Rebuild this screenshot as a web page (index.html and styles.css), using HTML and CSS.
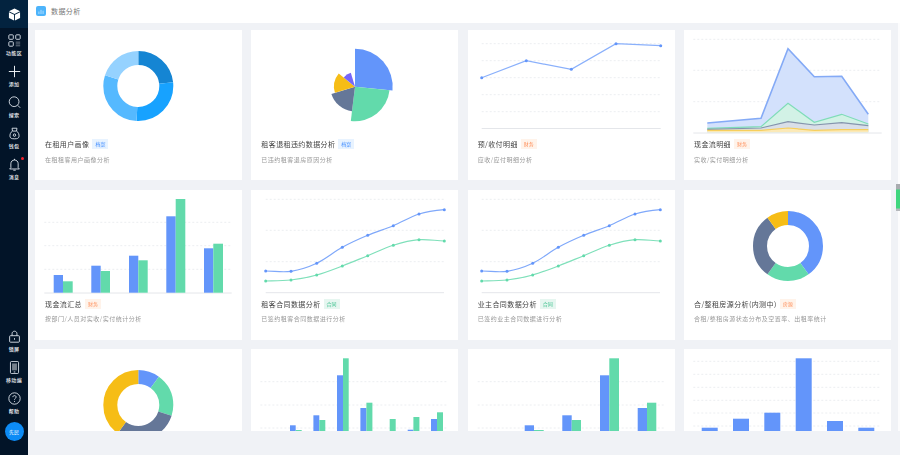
FILE: index.html
```html
<!DOCTYPE html>
<html>
	<head>
		<meta charset="utf-8">
		<title>数据分析</title>
		<link rel="stylesheet" href="styles.css">
	</head>
	<body>
		<div class="app">
			<div class="sidebar">
				<div class="logo">
					<svg width="13" height="13" viewBox="0 0 14 14"><path d="M7 0.5 13 3.5 7 6.5 1 3.5Z" fill="#fff"/><path d="M1 4.5 6.5 7.3V13.5L1 10.7Z" fill="#fff"/><path d="M13 4.5 7.5 7.3V13.5L13 10.7Z" fill="#fff"/></svg>
				</div>
				<ul class="nav">
					<li class="nav-item">
						<svg viewBox="0 0 16 16" fill="none" stroke="#dfe6ee" stroke-width="1.1"><rect x="1" y="1" width="5.5" height="5.5" rx="1"/><rect x="9.5" y="1" width="5.5" height="5.5" rx="1"/><rect x="1" y="9.5" width="5.5" height="5.5" rx="1"/><path d="M9.5 10H15M9.5 12.200H15M9.500 14.500H15" stroke="#75808c"/></svg>
						<span>功能区</span>
					</li>
					<li class="nav-item">
						<svg viewBox="0 0 16 16" fill="none" stroke="#eef2f6" stroke-width="1.2"><path d="M8 1V15M1 8H15"/></svg>
						<span>添加</span>
					</li>
					<li class="nav-item">
						<svg viewBox="0 0 16 16" fill="none" stroke="#dfe6ee" stroke-width="1.1"><circle cx="7.5" cy="7" r="6"/><path d="M12 11.500 15 14.500"/></svg>
						<span>搜索</span>
					</li>
					<li class="nav-item">
						<svg viewBox="0 0 16 16" fill="none" stroke="#dfe6ee" stroke-width="1.1"><path d="M5.500 5 5 1.500H11L10.500 5"/><path d="M5.500 5C3 6.500 2 9.500 2.500 12 3 14 4.500 14.500 8 14.500S13 14 13.500 12C14 9.500 13 6.500 10.500 5Z"/><circle cx="8" cy="10" r="1.500"/></svg>
						<span>钱包</span>
					</li>
					<li class="nav-item">
						<svg viewBox="0 0 16 16" fill="none" stroke="#dfe6ee" stroke-width="1.1"><path d="M3.500 12V7C3.500 4.200 5.500 2.500 8 2.500S12.500 4.200 12.500 7V12L14 13.500H2Z"/><path d="M8 1V2.500M6.500 15H9.500"/></svg>
						<span>消息</span>
						<i class="dot"></i>
					</li>
				</ul>
				<ul class="nav nav-bottom">
					<li class="nav-item">
						<svg viewBox="0 0 16 16" fill="none" stroke="#dfe6ee" stroke-width="1.1"><rect x="2" y="7" width="12" height="8" rx="1"/><path d="M5 7V4.500C5 2.800 6.300 1.500 8 1.500S11 2.800 11 4.500V7M8 10V12"/></svg>
						<span>锁屏</span>
					</li>
					<li class="nav-item">
						<svg viewBox="0 0 16 16" fill="none" stroke="#dfe6ee" stroke-width="1.1"><rect x="3" y="0.5" width="10" height="15" rx="1.500"/><rect x="5" y="3" width="6" height="8.500" fill="#75808c" stroke="none"/><path d="M7 13.500H9"/></svg>
						<span>移动端</span>
					</li>
					<li class="nav-item">
						<svg viewBox="0 0 16 16" fill="none" stroke="#dfe6ee" stroke-width="1.1"><circle cx="8" cy="8" r="7"/><path d="M6 6.300C6 3.800 10 3.800 10 6.300 10 7.800 8 7.800 8 9.500M8 11V12.200"/></svg>
						<span>帮助</span>
					</li>
				</ul>
				<div class="avatar">先民</div>
			</div>
			<div class="main">
				<div class="header">
					<span class="header-icon">
						<svg width="6" height="5" viewBox="0 0 7 6" fill="none" stroke="#bfe4ff" stroke-width="1"><path d="M1 6V3M3.500 6V1M6 6V2"/></svg>
					</span>
					<span class="header-title">数据分析</span>
				</div>
				<div class="content">
					<div class="grid">
						<div class="card">
							<div class="chart">
								<svg width="207" height="105" viewBox="0 0 207 105">
									<circle class="ring" cx="103.300" cy="56" r="28" stroke="#1585d3" pathLength="100" stroke-dasharray="23.300 76.700" stroke-dashoffset="25"/>
									<circle class="ring" cx="103.300" cy="56" r="28" stroke="#17a2ff" pathLength="100" stroke-dasharray="27.500 72.500" stroke-dashoffset="1.700"/>
									<circle class="ring" cx="103.300" cy="56" r="28" stroke="#55b9ff" pathLength="100" stroke-dasharray="29.200 70.800" stroke-dashoffset="-25.800"/>
									<circle class="ring" cx="103.300" cy="56" r="28" stroke="#95d2ff" pathLength="100" stroke-dasharray="20 80" stroke-dashoffset="-55"/>
								</svg>
							</div>
							<div class="card-title">在租用户画像<span class="tag tag-blue">档案</span></div>
							<div class="card-desc">在租租客用户画像分析</div>
						</div>
						<div class="card">
							<div class="chart">
								<svg width="207" height="105" viewBox="0 0 207 105">
									<path d="M104 56.700V18.700A38 38 0 0 1 141.500 60.600Z" fill="#6395fa"/>
									<path d="M104 56.700 138.500 60.300A34.700 34.700 0 0 1 99.800 91.100Z" fill="#62daab"/>
									<path d="M104 56.700 101 81.200A24.700 24.700 0 0 1 80.400 63.900Z" fill="#657798"/>
									<path d="M104 56.700 83.900 62.800A21 21 0 0 1 87.700 43.500Z" fill="#f6bd16"/>
									<path d="M104 56.700 92.700 47.600A14.500 14.500 0 0 1 99.800 42.800Z" fill="#7666f9"/>
								</svg>
							</div>
							<div class="card-title">租客退租违约数据分析<span class="tag tag-blue">档案</span></div>
							<div class="card-desc">已违约租客退房原因分析</div>
						</div>
						<div class="card">
							<div class="chart">
								<svg width="207" height="105" viewBox="0 0 207 105">
									<path class="grid-line" d="M13.700 13.700H192.700M13.700 30.700H192.700M13.700 47.700H192.700M13.700 64.700H192.700M13.700 81.700H192.700"/>
									<path class="axis" d="M13.700 98.500H192.700"/>
									<path class="line" d="M13.700 47.700 58.300 30.700 103.300 39.300 148 13.700 192.700 15.700" stroke="#8ab0fb"/>
									<g fill="#6395fa"><circle cx="13.700" cy="47.700" r="1.500"/><circle cx="58.300" cy="30.700" r="1.500"/><circle cx="103.300" cy="39.300" r="1.500"/><circle cx="148" cy="13.700" r="1.500"/><circle cx="192.700" cy="15.700" r="1.500"/></g>
								</svg>
							</div>
							<div class="card-title">预/收付明细<span class="tag tag-orange">财务</span></div>
							<div class="card-desc">应收/应付明细分析</div>
						</div>
						<div class="card">
							<div class="chart">
								<svg width="207" height="105" viewBox="0 0 207 105">
									<path class="grid-line" d="M9.300 9.300H196M9.300 40.300H196M9.300 71.700H196"/>
									<path class="axis" d="M9.300 103H197.700"/>
									<path d="M23.300 93 77 88.300 104 18.700 130.300 46.700 157.700 46.300 184.300 84.300V102.300H23.300Z" fill="#d3e1fc"/>
									<path d="M23.300 98.300 77 96.700 104 73.300 130.300 92.300 157.700 84.300 184.300 94V102.300H23.300Z" fill="#d2f2e6"/>
									<path d="M23.300 99.300 77 98 104 91.700 130.300 95 157.700 92.700 184.300 95.700V102.300H23.300Z" fill="#d9dfe8"/>
									<path d="M23.300 100.300 77 100.300 104 98 130.300 100.300 157.700 99.700 184.300 99.700V102.300H23.300Z" fill="#fbe9b8"/>
									<path class="line line-thick" d="M23.300 93 77 88.300 104 18.700 130.300 46.700 157.700 46.300 184.300 84.300" stroke="#84aaf6"/>
									<path class="line" d="M23.300 98.300 77 96.700 104 73.300 130.300 92.300 157.700 84.300 184.300 94" stroke="#7fdcb8"/>
									<path class="line" d="M23.300 99.300 77 98 104 91.700 130.300 95 157.700 92.700 184.300 95.700" stroke="#8594ad"/>
									<path class="line" d="M23.300 100.300 77 100.300 104 98 130.300 100.300 157.700 99.700 184.300 99.700" stroke="#f7cf5c"/>
								</svg>
							</div>
							<div class="card-title">现金流明细<span class="tag tag-orange">财务</span></div>
							<div class="card-desc">实收/实付明细分析</div>
						</div>
						<div class="card">
							<div class="chart">
								<svg width="207" height="105" viewBox="0 0 207 105">
									<path class="grid-line" d="M9.300 32.300H196.700M9.300 55.700H196.700M9.300 79.300H196.700"/>
									<path class="axis" d="M9.300 103H196.700"/>
									<g fill="#6395fa"><rect x="18.700" y="85" width="9.300" height="17.700"/><rect x="56.300" y="75.700" width="9.400" height="27"/><rect x="94" y="65.700" width="9.300" height="37"/><rect x="131.300" y="26.300" width="9.400" height="76.400"/><rect x="169" y="58.300" width="9.300" height="44.400"/></g>
									<g fill="#62daab"><rect x="28" y="91.300" width="9.700" height="11.400"/><rect x="65.700" y="81" width="9.300" height="21.700"/><rect x="103.300" y="70.300" width="9.400" height="32.400"/><rect x="140.700" y="9" width="9.600" height="93.700"/><rect x="178.300" y="53.700" width="9.700" height="49"/></g>
								</svg>
							</div>
							<div class="card-title">现金流汇总<span class="tag tag-orange">财务</span></div>
							<div class="card-desc">按部门/人员对实收/实付统计分析</div>
						</div>
						<div class="card">
							<div class="chart">
								<svg width="207" height="105" viewBox="0 0 207 105">
									<g id="contract-lines">
										<path class="grid-line" d="M14.700 9.300H193M14.700 40.300H193M14.700 71.700H193"/>
										<path class="axis" d="M14.700 102.700H193"/>
										<path class="line" d="M14.700 81C23.200 81 31.500 82.580 40 81.300C48.500 80.020 57.200 77.300 65.700 73.300C74.200 69.300 82.800 62 91.300 57.300C99.800 52.600 108.200 48.900 116.700 45.300C125.200 41.700 133.800 39.250 142.300 35.700C150.800 32.150 159.500 26.670 168 24C176.500 21.330 184.800 20.400 193.300 19.700" stroke="#7fa8fa"/>
										<path class="line" d="M14.700 91C23.200 90.830 31.500 91 40 90C48.500 89 57.200 87.330 65.700 85C74.200 82.670 82.800 79.200 91.300 76C99.800 72.800 108.200 69.150 116.700 65.700C125.200 62.250 133.800 57.970 142.300 55.300C150.800 52.630 159.500 50.420 168 49.700C176.500 48.980 184.800 50.800 193.300 51" stroke="#7fe0ba"/>
										<g fill="#6395fa"><circle cx="14.700" cy="81" r="1.500"/><circle cx="40" cy="81.300" r="1.500"/><circle cx="65.700" cy="73.300" r="1.500"/><circle cx="91.300" cy="57.300" r="1.500"/><circle cx="116.700" cy="45.300" r="1.500"/><circle cx="142.300" cy="35.700" r="1.500"/><circle cx="168" cy="24" r="1.500"/><circle cx="193.300" cy="19.700" r="1.500"/></g>
										<g fill="#62daab"><circle cx="14.700" cy="91" r="1.500"/><circle cx="40" cy="90" r="1.500"/><circle cx="65.700" cy="85" r="1.500"/><circle cx="91.300" cy="76" r="1.500"/><circle cx="116.700" cy="65.700" r="1.500"/><circle cx="142.300" cy="55.300" r="1.500"/><circle cx="168" cy="49.700" r="1.500"/><circle cx="193.300" cy="51" r="1.500"/></g>
									</g>
								</svg>
							</div>
							<div class="card-title">租客合同数据分析<span class="tag tag-green">合同</span></div>
							<div class="card-desc">已签约租客合同数据进行分析</div>
						</div>
						<div class="card">
							<div class="chart">
								<svg width="207" height="105" viewBox="0 0 207 105">
									<use href="#contract-lines" x="-1"/>
								</svg>
							</div>
							<div class="card-title">业主合同数据分析<span class="tag tag-green">合同</span></div>
							<div class="card-desc">已签约业主合同数据进行分析</div>
						</div>
						<div class="card">
							<div class="chart">
								<svg width="207" height="105" viewBox="0 0 207 105">
									<circle class="ring" cx="104" cy="56" r="28" stroke="#6395fa" pathLength="100" stroke-dasharray="40 60" stroke-dashoffset="25"/>
									<circle class="ring" cx="104" cy="56" r="28" stroke="#62daab" pathLength="100" stroke-dasharray="20 80" stroke-dashoffset="-15"/>
									<circle class="ring" cx="104" cy="56" r="28" stroke="#657798" pathLength="100" stroke-dasharray="30 70" stroke-dashoffset="-35"/>
									<circle class="ring" cx="104" cy="56" r="28" stroke="#f6bd16" pathLength="100" stroke-dasharray="10 90" stroke-dashoffset="-65"/>
								</svg>
							</div>
							<div class="card-title">合/整租房源分析(内测中)<span class="tag tag-orange">房源</span></div>
							<div class="card-desc">合租/整租房源状态分布及空置率、出租率统计</div>
						</div>
						<div class="card">
							<div class="chart">
								<svg width="207" height="105" viewBox="0 0 207 105">
									<circle class="ring" cx="103.300" cy="56" r="28" stroke="#6395fa" pathLength="100" stroke-dasharray="10 90" stroke-dashoffset="25"/>
									<circle class="ring" cx="103.300" cy="56" r="28" stroke="#62daab" pathLength="100" stroke-dasharray="20 80" stroke-dashoffset="15"/>
									<circle class="ring" cx="103.300" cy="56" r="28" stroke="#657798" pathLength="100" stroke-dasharray="30 70" stroke-dashoffset="-5"/>
									<circle class="ring" cx="103.300" cy="56" r="28" stroke="#f6bd16" pathLength="100" stroke-dasharray="40 60" stroke-dashoffset="-35"/>
								</svg>
							</div>
						</div>
						<div class="card">
							<div class="chart">
								<svg width="207" height="105" viewBox="0 0 207 105">
									<path class="grid-line" d="M9.400 32.700H195.500M9.400 56H195.500M9.400 79H195.500"/>
									<g fill="#6395fa"><rect x="39" y="76.300" width="5.700" height="26"/><rect x="62.400" y="66.300" width="5.900" height="36"/><rect x="86" y="26.300" width="6" height="76"/><rect x="109.400" y="59" width="6" height="43"/><rect x="156.700" y="80.700" width="5.700" height="22"/><rect x="180" y="70" width="6" height="33"/></g>
									<g fill="#62daab"><rect x="44.700" y="81" width="6" height="22"/><rect x="68.300" y="71" width="6" height="32"/><rect x="92" y="9.300" width="5.700" height="94"/><rect x="115.400" y="53.700" width="6" height="49"/><rect x="138.700" y="70" width="6" height="33"/><rect x="162.400" y="68" width="6" height="35"/><rect x="186" y="63.300" width="6" height="40"/></g>
								</svg>
							</div>
						</div>
						<div class="card">
							<div class="chart">
								<svg width="207" height="105" viewBox="0 0 207 105">
									<path class="grid-line" d="M9.700 32.700H195.700M9.700 56H195.700M9.700 79H195.700"/>
									<g fill="#6395fa"><rect x="56.700" y="76.300" width="9.300" height="26"/><rect x="94.300" y="66.300" width="9.400" height="36"/><rect x="132" y="26.300" width="9.300" height="76"/><rect x="169.700" y="59" width="9.300" height="43"/></g>
									<g fill="#62daab"><rect x="66" y="81" width="9.700" height="22"/><rect x="103.700" y="71" width="9.300" height="32"/><rect x="141.300" y="9.300" width="9.700" height="94"/><rect x="179" y="53.700" width="9.300" height="49"/></g>
								</svg>
							</div>
						</div>
						<div class="card">
							<div class="chart">
								<svg width="207" height="105" viewBox="0 0 207 105">
									<path class="grid-line" d="M9.300 12.300H196M9.300 25.300H196M9.300 38.300H196M9.300 51.300H196M9.300 64H196M9.300 77H196"/>
									<g fill="#6395fa"><rect x="17.700" y="78.700" width="16" height="24"/><rect x="49" y="69.700" width="16" height="33"/><rect x="80.300" y="63.700" width="16" height="39"/><rect x="111.700" y="9.300" width="16" height="94"/><rect x="143" y="72" width="16" height="31"/><rect x="174.300" y="78.700" width="16" height="24"/></g>
								</svg>
							</div>
						</div>
					</div>
				</div>
				<div class="scrollbar"><i class="scrollbar-thumb"></i></div>
			</div>
		</div>
	</body>
</html>
```

FILE: styles.css
```css
* {
	margin: 0;
	padding: 0;
	box-sizing: border-box;
}

ul {
	list-style: none;
}

html,
body {
	height: 100%;
	overflow: hidden;
}

body {
	font-family: "Noto Sans CJK SC", "Liberation Sans", sans-serif;
	background-color: #f0f2f6;
}

.app {
	display: flex;
	height: 455px;
	filter: blur(0.45px);
}

/* 左侧导航 */
.sidebar {
	width: 28px;
	flex-shrink: 0;
	background-color: #021428;
	display: flex;
	flex-direction: column;
	align-items: center;
}

.logo {
	width: 28px;
	height: 28px;
	flex-shrink: 0;
	background-color: #03233f;
	display: flex;
	align-items: center;
	justify-content: center;
}

.nav {
	width: 28px;
	padding-top: 6px;
	display: flex;
	flex-direction: column;
	gap: 7px;
}

.nav-bottom {
	margin-top: auto;
	padding-top: 0;
}

.nav-item {
	height: 24px;
	display: flex;
	flex-direction: column;
	align-items: center;
	position: relative;
	color: #f2f5f8;
	font-size: 5px;
	font-weight: 500;
	line-height: 7px;
	letter-spacing: 0.3px;
}

.nav-item svg {
	display: block;
	width: 13px;
	height: 13px;
	margin-bottom: 1.5px;
}

.nav-item .dot {
	position: absolute;
	top: -1.5px;
	right: 4.5px;
	width: 3px;
	height: 3px;
	border-radius: 50%;
	background-color: #f5222d;
}

.avatar {
	width: 19px;
	height: 19px;
	margin: 5.5px 0 14.5px;
	flex-shrink: 0;
	border-radius: 50%;
	background-color: #0d8bf5;
	color: #fff;
	font-size: 5px;
	line-height: 19px;
	text-align: center;
}

/* 右侧内容 */
.main {
	flex: 1;
	min-width: 0;
	position: relative;
}

.header {
	height: 23px;
	background-color: #fff;
	display: flex;
	align-items: center;
	padding: 0 0 1px 8px;
	gap: 5px;
}

.header-icon {
	width: 10px;
	height: 10px;
	border-radius: 2px;
	background-color: #4db4fb;
	display: flex;
	align-items: center;
	justify-content: center;
}

.header-title {
	font-size: 7px;
	color: #777;
	letter-spacing: 0.4px;
}

.content {
	height: 408px;
	padding: 7px 9px 0 7px;
	overflow: hidden;
}

.grid {
	display: grid;
	grid-template-columns: repeat(4, 207px);
	grid-auto-rows: 150px;
	column-gap: 9.33px;
	row-gap: 9.5px;
}

.card {
	background-color: #fff;
}

.chart {
	height: 105px;
}

.chart svg {
	display: block;
}

.card-title {
	height: 12px;
	margin-top: 3px;
	padding-left: 10px;
	display: flex;
	align-items: center;
	font-size: 7px;
	line-height: 12px;
	color: #444;
	letter-spacing: 0.4px;
}

.card-desc {
	margin-top: 5.5px;
	padding-left: 10px;
	font-size: 6px;
	line-height: 8px;
	color: #999;
	letter-spacing: 0.5px;
}

.tag {
	margin-left: 3px;
	padding: 0 3px;
	height: 10px;
	line-height: 10px;
	font-size: 5px;
	letter-spacing: 0;
}

.tag-blue {
	color: #3f8cff;
	background-color: #e8f3ff;
}

.tag-orange {
	color: #ff8f5a;
	background-color: #fff3ea;
}

.tag-green {
	color: #3cc08c;
	background-color: #e6f6f0;
}

/* 图表 */
.ring {
	fill: none;
	stroke-width: 14;
}

.grid-line {
	fill: none;
	stroke: #eceef1;
	stroke-width: 1;
	stroke-dasharray: 2 2;
}

.axis {
	fill: none;
	stroke: #e4e6ea;
	stroke-width: 1;
}

.line {
	fill: none;
	stroke-width: 1.2;
}

.line-thick {
	stroke-width: 1.6;
}

/* 滚动条 */
.scrollbar {
	position: absolute;
	top: 23px;
	right: 0;
	width: 2px;
	height: 408px;
	background-color: #fcfcfd;
}

.scrollbar-thumb {
	position: absolute;
	top: 161px;
	left: -2px;
	width: 3.5px;
	height: 27px;
	background: linear-gradient(#a9acb0 0, #a9acb0 5px, #3fd67e 6px, #3fd67e 24px, #b5b8bc 25px);
}
```
